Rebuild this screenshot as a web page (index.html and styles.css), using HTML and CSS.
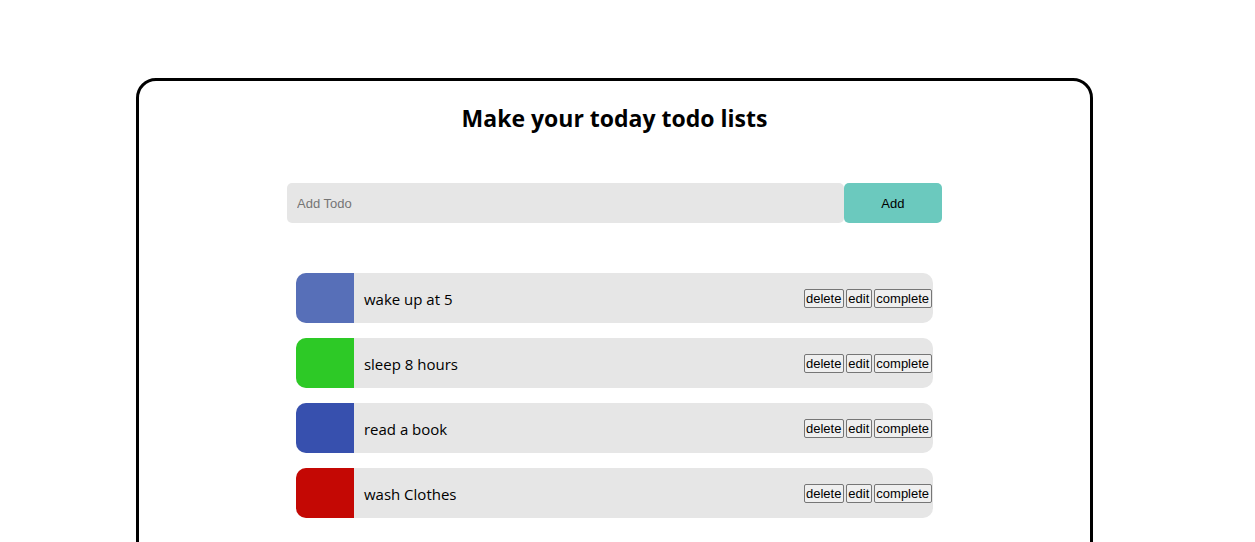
FILE: index.html
```html
<!DOCTYPE html>
<html lang="en">
<head>
<meta charset="utf-8">
<title>Todo list</title>
<link rel="stylesheet" href="styles.css">
</head>
<body>
<main class="board">
  <h1 class="title">Make your today todo lists</h1>
  <form class="add-form">
    <input class="add-input" type="text" placeholder="Add Todo" aria-label="Add Todo">
    <button class="add-button" type="button">Add</button>
  </form>
  <ul class="list">
    <li class="item"><span class="swatch blue"></span><span class="text">wake up at 5</span><div class="actions"><button type="button">delete</button><button type="button">edit</button><button type="button">complete</button></div></li>
    <li class="item"><span class="swatch green"></span><span class="text">sleep 8 hours</span><div class="actions"><button type="button">delete</button><button type="button">edit</button><button type="button">complete</button></div></li>
    <li class="item"><span class="swatch indigo"></span><span class="text">read a book</span><div class="actions"><button type="button">delete</button><button type="button">edit</button><button type="button">complete</button></div></li>
    <li class="item"><span class="swatch red"></span><span class="text">wash Clothes</span><div class="actions"><button type="button">delete</button><button type="button">edit</button><button type="button">complete</button></div></li>
  </ul>
</main>
</body>
</html>
```

FILE: styles.css
```css
* {
  box-sizing: border-box;
  margin: 0;
  padding: 0;
}

body {
  padding: 78px 162px 0 136px;
  font-family: "Segoe UI", "Open Sans", "Noto Sans", sans-serif;
  color: #000;
  background: #fff;
}

.board {
  display: flex;
  flex-direction: column;
  align-items: center;
  min-height: 100vh;
  padding: 19px 0;
  border: 3px solid #000;
  border-radius: 20px;
}

.title {
  font-size: 23px;
  font-weight: 700;
  line-height: 36px;
}

.add-form {
  display: flex;
  width: 69%;
  max-width: 655px;
  height: 40px;
  margin-top: 47px;
}

.add-input,
.add-button {
  border: 0;
  border-radius: 5px;
  font: 13px "Liberation Sans", Arial, sans-serif;
}

.add-input {
  flex: 1;
  min-width: 0;
  padding: 0 10px;
  background: #e6e6e6;
}

.add-input::placeholder {
  color: #757575;
}

.add-button {
  width: 15%;
  background: #6bc9be;
  color: #000;
}

.list {
  display: grid;
  gap: 15px;
  width: 67%;
  margin-top: 50px;
  list-style: none;
}

.item {
  display: flex;
  align-items: center;
  height: 50px;
  padding-right: 1px;
  overflow: hidden;
  border-radius: 10px;
  background: #e6e6e6;
}

.swatch {
  align-self: stretch;
  width: 58px;
}

.blue {
  background: #576fb8;
}

.green {
  background: #2dc926;
}

.indigo {
  background: #3750ae;
}

.red {
  background: #c40804;
}

.text {
  flex: 1;
  padding: 2px 10px 0;
  font-size: 15px;
  line-height: 24px;
}

.actions {
  display: flex;
  gap: 2px;
}

.actions button {
  padding: 1px 2px 1px 1px;
  border: 1px solid #767676;
  border-radius: 2px;
  background: #efefef;
  color: #000;
  font: 13px/15px "Liberation Sans", Arial, sans-serif;
}
```
